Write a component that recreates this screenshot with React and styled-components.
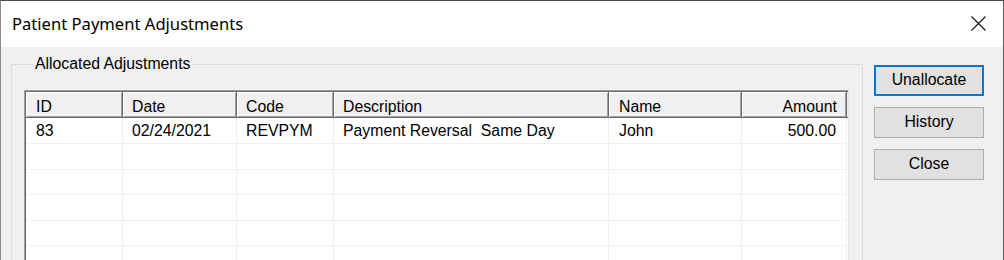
import React from "react";
import styled, { createGlobalStyle } from "styled-components";

const Global = createGlobalStyle`
  html, body { margin: 0; padding: 0; background: #f0f0f0; }
  body { overflow: hidden; }
`;

const Window = styled.div`
  width: 1004px;
  height: 260px;
  box-sizing: border-box;
  border-top: 1px solid #4a4a4a;
  border-left: 1px solid #8c8c8c;
  border-right: 1px solid #5a5a5a;
  background: #f0f0f0;
  display: flex;
  flex-direction: column;
  overflow: hidden;
  font-family: "Liberation Sans", Arial, sans-serif;
  color: #000;
`;

const TitleBar = styled.div`
  height: 46px;
  flex: none;
  background: #fff;
  display: flex;
  align-items: center;
  justify-content: space-between;
  padding: 0 17px 0 11px;
`;

const Title = styled.div`
  font-family: "Noto Sans", "Open Sans", sans-serif;
  font-size: 16.6px;
  line-height: 20px;
  padding-bottom: 1px;
`;

const CloseIcon = styled.svg`
  width: 15px;
  height: 15px;
  display: block;
  margin-top: -2px;
`;

const Body = styled.div`
  flex: 1;
  display: flex;
  align-items: flex-start;
  gap: 11px;
  padding-left: 10px;
  font-size: 15.5px;
`;

const Group = styled.fieldset`
  box-sizing: border-box;
  width: 852px;
  height: 260px;
  margin: 8px 0 0 0;
  padding: 0 0 0 12px;
  border: 1px solid #dcdcdc;
  min-width: 0;
`;

const Legend = styled.legend`
  margin-left: 9px;
  padding: 0 2px 0 2px;
  font-size: 15.8px;
  line-height: 18px;
  color: #000;
`;

const List = styled.div`
  margin-top: 17px;
  width: 825px;
  box-sizing: border-box;
  height: 200px;
  background: #fff;
  border-top: 1px solid #a0a0a0;
  border-left: 1px solid #a0a0a0;
  border-right: 1px solid #e3e3e3;
  box-shadow: inset 1px 1px 0 #696969;
  padding: 1px 0 0 1px;
`;

const Row = styled.div`
  display: flex;
  height: ${(p) => p.$h}px;
`;

const HeadCell = styled.div`
  box-sizing: border-box;
  width: ${(p) => p.$w}px;
  flex: none;
  height: 100%;
  background: #f0f0f0;
  border-right: 1px solid #696969;
  border-bottom: 1px solid #696969;
  box-shadow: inset 1px 1px 0 #fff, inset -1px -1px 0 #a0a0a0;
  display: flex;
  align-items: center;
  justify-content: ${(p) => (p.$right ? "flex-end" : "flex-start")};
  padding: ${(p) => (p.$right ? "0 9px 0 0" : `0 0 0 ${p.$pl}px`)};
  padding-top: 4px;
  white-space: nowrap;
  font-size: 15.8px;
`;

const HeadFill = styled.div`
  flex: 1;
  height: 100%;
  background: #f0f0f0;
  border-bottom: 1px solid #696969;
  box-sizing: border-box;
`;

const Cell = styled.div`
  box-sizing: border-box;
  width: ${(p) => p.$w}px;
  flex: none;
  height: 100%;
  border-right: 1px solid #f0f0f0;
  border-bottom: 1px solid #f0f0f0;
  display: flex;
  align-items: center;
  justify-content: ${(p) => (p.$right ? "flex-end" : "flex-start")};
  padding: ${(p) => (p.$right ? "0 10px 0 0" : `0 0 0 ${p.$pl}px`)};
  white-space: pre;
  font-size: 15.8px;
`;

const Buttons = styled.div`
  display: flex;
  flex-direction: column;
  gap: 11px;
  margin-top: 18px;
`;

const Button = styled.button`
  box-sizing: border-box;
  width: 110px;
  height: 31px;
  margin: 0;
  padding: 0 0 1px 0;
  background: #e1e1e1;
  border: ${(p) => (p.$default ? "2px solid #0078d7" : "1px solid #adadad")};
  font-family: "Liberation Sans", Arial, sans-serif;
  font-size: 15.8px;
  color: #000;
  cursor: default;
`;

const columns = [
  { key: "id", label: "ID", w: 97, pl: 10 },
  { key: "date", label: "Date", w: 114, pl: 9 },
  { key: "code", label: "Code", w: 97, pl: 9 },
  { key: "desc", label: "Description", w: 275, pl: 9 },
  { key: "name", label: "Name", w: 133, pl: 10 },
  { key: "amount", label: "Amount", w: 105, right: true },
];

const rows = [
  { id: "83", date: "02/24/2021", code: "REVPYM", desc: "Payment Reversal  Same Day", name: "John", amount: "500.00" },
  {}, {}, {}, {}, {},
];

const rowHeights = [26, 26, 25, 26, 25, 26];

export default function App() {
  return (
    <>
      <Global />
      <Window>
        <TitleBar>
          <Title>Patient Payment Adjustments</Title>
          <CloseIcon viewBox="0 0 15 15">
            <path d="M0.5 0.5 L14.5 14.5 M14.5 0.5 L0.5 14.5" stroke="#111" strokeWidth="1.1" fill="none" />
          </CloseIcon>
        </TitleBar>
        <Body>
          <Group>
            <Legend>Allocated Adjustments</Legend>
            <List>
              <Row $h={26}>
                {columns.map((c) => (
                  <HeadCell key={c.key} $w={c.w} $pl={c.pl} $right={c.right}>
                    {c.label}
                  </HeadCell>
                ))}
                <HeadFill />
              </Row>
              {rows.map((r, i) => (
                <Row key={i} $h={rowHeights[i]}>
                  {columns.map((c) => (
                    <Cell key={c.key} $w={c.w} $pl={c.pl} $right={c.right}>
                      {r[c.key] || ""}
                    </Cell>
                  ))}
                </Row>
              ))}
            </List>
          </Group>
          <Buttons>
            <Button $default>Unallocate</Button>
            <Button>History</Button>
            <Button>Close</Button>
          </Buttons>
        </Body>
      </Window>
    </>
  );
}
